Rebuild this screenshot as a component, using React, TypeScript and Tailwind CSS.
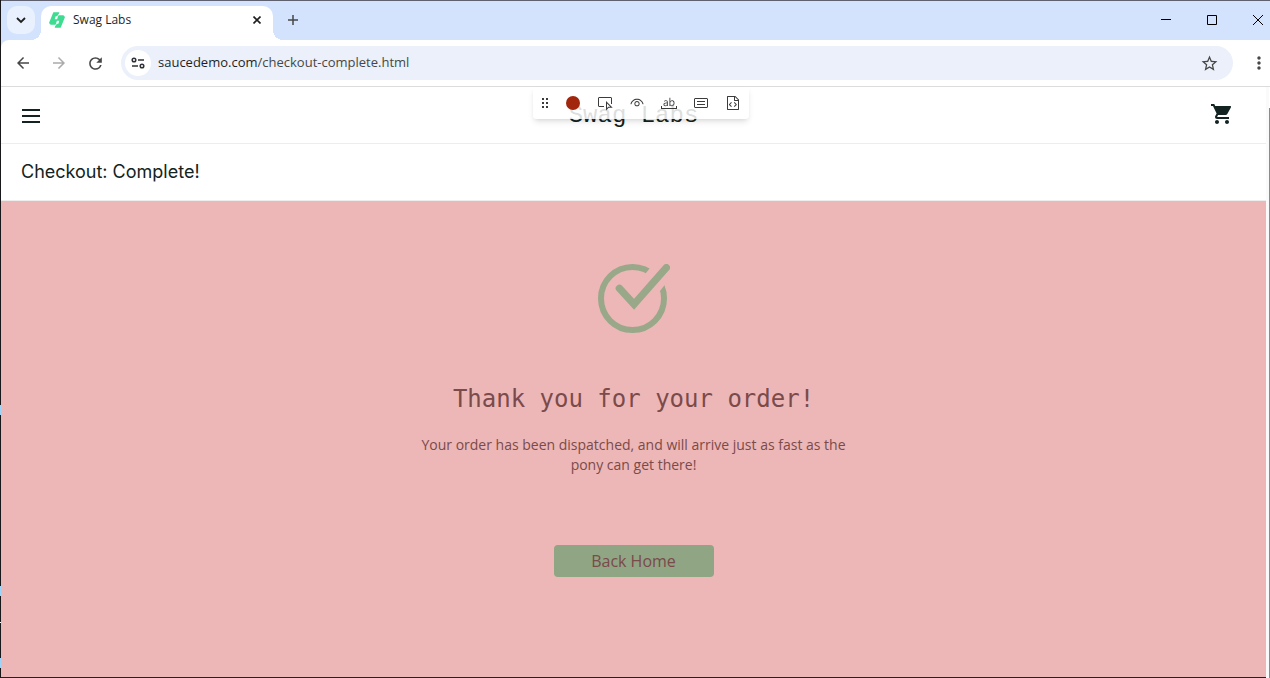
import { MdShoppingCart, MdStarBorder, MdArrowBack, MdArrowForward, MdRefresh, MdMoreVert } from "react-icons/md";
import { VscGripper, VscInspect, VscEye, VscWholeWord, VscSymbolConstant, VscFileCode } from "react-icons/vsc";

function Favicon() {
  return (
    <svg width="16" height="16" viewBox="0 0 48 48" aria-hidden="true">
      <path d="M13 1h18l-4 12h-7l-3 9h8l-5 16H5l-5-5z" fill="#3ddc91" />
      <path d="M35 47H17l4-12h7l3-9h-8l5-16h15l5 5z" fill="#3ddc91" />
      <path d="M29 7l-5 8M19 41l5-8" fill="none" stroke="#fff" strokeWidth="2" />
    </svg>
  );
}

function TuneIcon() {
  return (
    <svg width="14" height="14" viewBox="0 0 14 14" fill="none" stroke="#303134" strokeWidth="1.5" aria-hidden="true">
      <circle cx="3" cy="4" r="1.8" />
      <path d="M7 4h6M1 10h6" />
      <circle cx="11" cy="10" r="1.8" />
    </svg>
  );
}

function OrderCheck() {
  return (
    <svg width="72" height="69" viewBox="54 42 216 207" aria-hidden="true">
      <circle cx="157.5" cy="145.5" r="94.5" fill="none" stroke="#98a888" strokeWidth="18" />
      <path d="M222 39L190 79L230 136L264 92Z" fill="#edb7b7" />
      <path d="M118 115L162 163L259 53" fill="none" stroke="#98a888" strokeWidth="22" strokeLinecap="round" />
    </svg>
  );
}

function TabStrip() {
  return (
    <div className="flex h-10 items-end border-t border-[#5f6070] bg-[#d3e2fd]">
      <div className="flex h-[34px] w-[30px] items-start justify-end">
        <button aria-label="Search tabs" className="-mr-1 flex size-7 shrink-0 items-center justify-center rounded-[10px] bg-[#e9f1fe]">
          <svg width="10" height="8" viewBox="0 0 10 8" fill="none" stroke="#1f1f1f" strokeWidth="1.8">
            <path d="M1 2l4 4 4-4" />
          </svg>
        </button>
      </div>
      <div className="size-2.5 bg-[radial-gradient(circle_at_0_0,transparent_10px,#fff_10px)]" />
      <div className="flex h-[34px] w-[232px] items-center rounded-t-[10px] bg-white px-2 pb-1.5">
        <Favicon />
        <span className="ml-2 flex-1 text-xs text-[#1f1f1f]">Swag Labs</span>
        <button aria-label="Close tab" className="flex size-4 items-center justify-center">
          <svg width="8" height="8" viewBox="0 0 8 8" stroke="#1f1f1f" strokeWidth="1.6">
            <path d="M0.5 0.5l7 7M7.5 0.5l-7 7" />
          </svg>
        </button>
      </div>
      <div className="size-2.5 bg-[radial-gradient(circle_at_100%_0,transparent_10px,#fff_10px)]" />
      <button aria-label="New tab" className="flex h-10 w-5 items-center justify-center">
        <svg width="10" height="10" viewBox="0 0 10 10" stroke="#474747" strokeWidth="1.5">
          <path d="M5 0v10M0 5h10" />
        </svg>
      </button>
      <div className="ml-auto flex h-10 items-center">
        <button aria-label="Minimize" className="flex h-10 w-[46px] items-center justify-center">
          <svg width="10" height="10" viewBox="0 0 10 10" fill="#000">
            <path d="M0 4h10v1H0z" />
          </svg>
        </button>
        <button aria-label="Maximize" className="flex h-10 w-[46px] items-center justify-center">
          <svg width="10" height="10" viewBox="0 0 10 10" fill="none" stroke="#000">
            <path d="M0.5 0.5h9v9h-9z" />
          </svg>
        </button>
        <button aria-label="Close" className="flex h-10 w-[35px] items-center justify-end pr-[7px]">
          <svg width="10" height="10" viewBox="0 0 10 10" stroke="#000">
            <path d="M0 0l10 10M10 0L0 10" />
          </svg>
        </button>
      </div>
    </div>
  );
}

function AddressBar() {
  return (
    <div className="bg-[#d3e2fd]">
      <div className="flex h-[47px] items-center rounded-tl-lg border-b border-[#dcdcdc] bg-white pl-3">
        <button aria-label="Back" className="mr-4 flex size-5 items-center justify-center text-[#474747]"><MdArrowBack size={18} /></button>
        <button aria-label="Forward" className="mr-4 flex size-5 items-center justify-center text-[#ababab]"><MdArrowForward size={18} /></button>
        <button aria-label="Reload" className="mr-4 flex size-5 items-center justify-center text-[#474747]"><MdRefresh size={19} /></button>
        <div className="flex h-[34px] flex-1 items-center rounded-full bg-[#ebf0fa] pr-3.5 pl-1">
          <button aria-label="View site information" className="flex size-[26px] items-center justify-center rounded-full bg-white">
            <TuneIcon />
          </button>
          <a href="#" className="ml-[7px] flex-1 text-[13px] text-[#474747]">
            <span className="text-[#1f1f1f]">saucedemo.com</span>/checkout-complete.html
          </a>
          <button aria-label="Bookmark this tab" className="text-[#474747]"><MdStarBorder size={19} /></button>
        </div>
        <button aria-label="Menu" className="mr-px ml-4 text-[#474747]"><MdMoreVert size={20} /></button>
      </div>
    </div>
  );
}

function RecorderBar() {
  return (
    <div className="absolute inset-x-0 top-0 z-10 flex justify-center pl-3.5">
      <div className="flex h-8 items-center rounded-b-sm bg-white/85 text-[#3b3b3b] shadow-md">
        <div className="flex w-6 justify-center"><VscGripper size={16} /></div>
        <button aria-label="Record" className="flex w-8 justify-center"><span className="size-3.5 rounded-full bg-[#a1260d]" /></button>
        <button aria-label="Pick locator" className="flex w-8 justify-center"><VscInspect size={16} /></button>
        <button aria-label="Assert visibility" className="flex w-8 justify-center"><VscEye size={16} /></button>
        <button aria-label="Assert text" className="flex w-8 justify-center"><VscWholeWord size={16} /></button>
        <button aria-label="Assert value" className="flex w-8 justify-center"><VscSymbolConstant size={16} /></button>
        <button aria-label="Assert snapshot" className="flex w-8 justify-center"><VscFileCode size={16} /></button>
      </div>
    </div>
  );
}

export default function App() {
  return (
    <div className="flex min-h-screen bg-white font-['Open_Sans','Noto_Sans',sans-serif]">
      <div className="w-px bg-[linear-gradient(#18181b_405px,#9cd3f8_405px,#9cd3f8_415px,#18181b_415px,#18181b_586px,#9cd3f8_586px,#9cd3f8_596px,#18181b_596px,#18181b_622px,#fff_622px,#fff_623px,#18181b_623px,#18181b_658px,#9cd3f8_658px,#9cd3f8_668px,#18181b_668px)]" />
      <div className="flex min-w-0 flex-1 flex-col">
        <TabStrip />
        <AddressBar />
        <div className="flex flex-1">
          <div className="relative flex flex-1 flex-col text-[#132322]">
            <RecorderBar />
            <header className="grid h-[57px] grid-cols-3 items-center border-b border-[#ededed] px-5 pt-0.5">
              <button aria-label="Open menu" className="w-5">
                <svg width="20" height="16" viewBox="0 0 20 16" fill="#132322">
                  <rect x="1" y="1" width="18" height="2" />
                  <rect x="1" y="7" width="18" height="2" />
                  <rect x="1" y="13" width="18" height="2" />
                </svg>
              </button>
              <div className="text-center font-['Liberation_Mono',monospace] text-2xl">Swag Labs</div>
              <a href="#" aria-label="Cart" className="mr-3 -mt-1 justify-self-end"><MdShoppingCart size={24} /></a>
            </header>
            <div className="flex h-[57px] items-center border-b border-[#ededed] px-5">
              <h1 className="font-['Inter',sans-serif] text-lg">Checkout: Complete!</h1>
            </div>
            <main className="flex flex-1 flex-col items-center border-b border-[#222] bg-[#edb7b7] pt-[63px] text-[#7b4a4a]">
              <OrderCheck />
              <h2 className="mt-[50px] font-['DejaVu_Sans_Mono',monospace] text-2xl">Thank you for your order!</h2>
              <p className="mt-5 w-[440px] text-center text-sm leading-5">
                Your order has been dispatched, and will arrive just as fast as the pony can get there!
              </p>
              <button className="mt-[70px] h-8 w-40 rounded bg-[#8fa583] text-base">Back Home</button>
            </main>
          </div>
          <div className="w-[3px] bg-[#fafafa]" />
          <div className="mt-[21px] w-px bg-[#8b8b8b]" />
        </div>
      </div>
    </div>
  );
}
